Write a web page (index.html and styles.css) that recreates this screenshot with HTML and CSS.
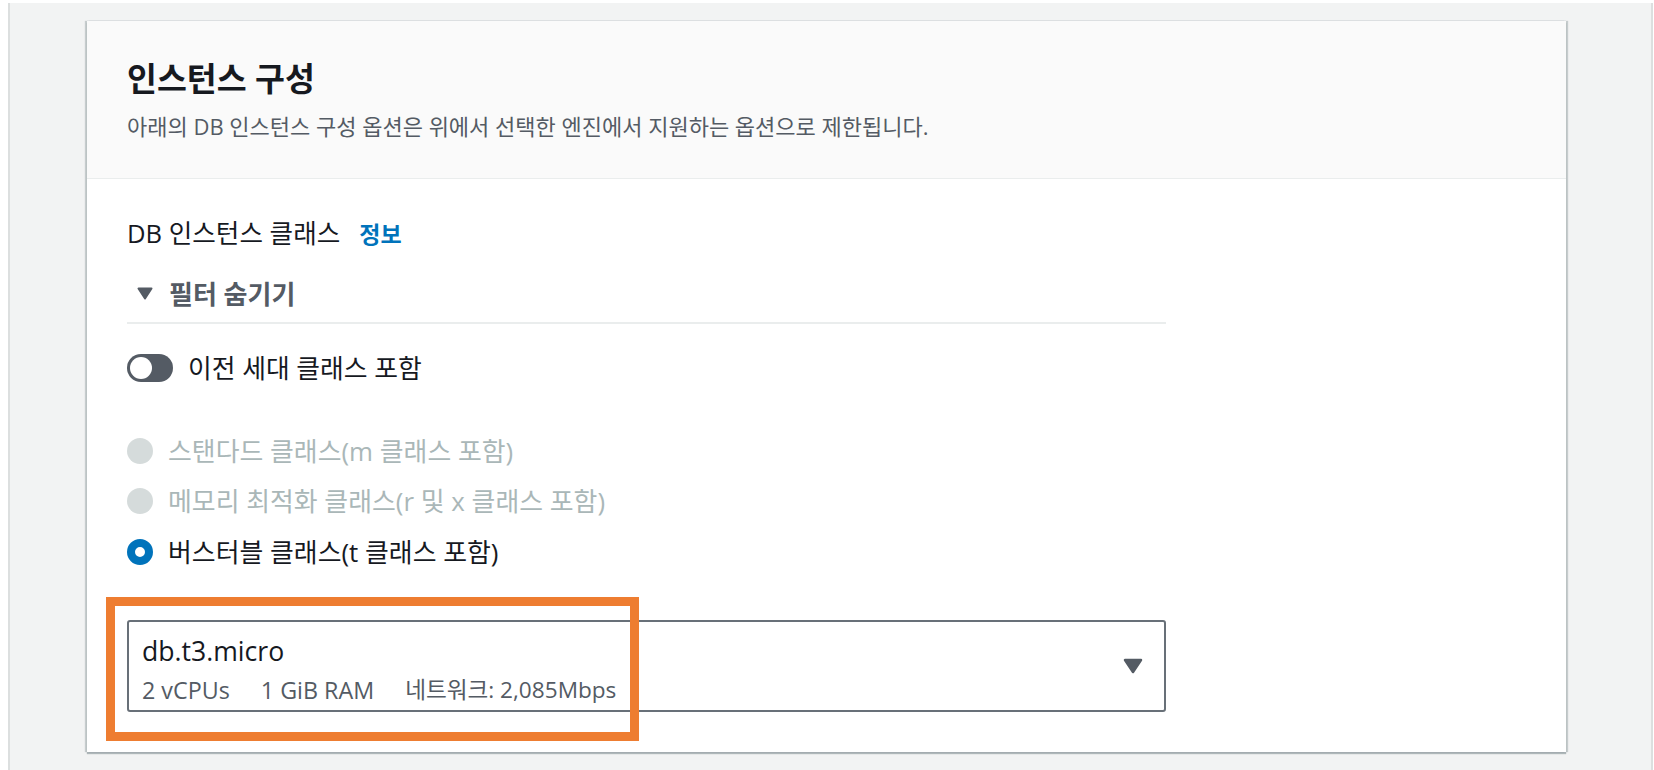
FILE: index.html
```html
<!DOCTYPE html>
<html lang="ko">
<head>
<meta charset="utf-8">
<title>인스턴스 구성</title>
<link rel="stylesheet" href="styles.css">
</head>
<body>
<div class="page">
  <section class="card">
    <header class="card-header">
      <h2 class="title">인스턴스 구성</h2>
      <p class="desc">아래의 DB 인스턴스 구성 옵션은 위에서 선택한 엔진에서 지원하는 옵션으로 제한됩니다.</p>
    </header>
    <div class="card-body">
      <div class="field-label"><span>DB 인스턴스 클래스</span><a class="info">정보</a></div>
      <div class="filter-toggle">
        <svg class="filter-caret" width="16" height="13" viewBox="0 0 16 13"><path d="M1.5 1.5 H14.5 L8 11.5 Z" fill="#545b64" stroke="#545b64" stroke-width="2" stroke-linejoin="round"/></svg>
        <span>필터 숨기기</span>
      </div>
      <div class="divider"></div>
      <div class="toggle-row">
        <span class="toggle"><span class="knob"></span></span>
        <span>이전 세대 클래스 포함</span>
      </div>
      <div class="radios">
        <div class="radio-row disabled"><span class="radio"></span><span>스탠다드 클래스(m 클래스 포함)</span></div>
        <div class="radio-row disabled"><span class="radio"></span><span>메모리 최적화 클래스(r 및 x 클래스 포함)</span></div>
        <div class="radio-row"><span class="radio checked"></span><span>버스터블 클래스(t 클래스 포함)</span></div>
      </div>
      <div class="select-wrap">
        <div class="select">
          <div class="select-text">
            <div class="select-value">db.t3.micro</div>
            <div class="select-meta"><span>2 vCPUs</span><span>1 GiB RAM</span><span class="net">네트워크: 2,085Mbps</span></div>
          </div>
          <svg class="select-caret" width="20" height="16" viewBox="0 0 20 16"><path d="M2 2 H18 L10 14 Z" fill="#545b64" stroke="#545b64" stroke-width="2.5" stroke-linejoin="round"/></svg>
        </div>
        <div class="highlight"></div>
      </div>
    </div>
  </section>
</div>
</body>
</html>
```

FILE: styles.css
```css
html, body {
  margin: 0;
  background: #ffffff;
}
body {
  padding: 3px 1px 0 8px;
  font-family: "Open Sans", "Noto Sans CJK KR", sans-serif;
  color: #16191f;
}
.page {
  box-sizing: border-box;
  height: 767px;
  background: #f2f3f3;
  border-left: 2px solid #dcdfdf;
  border-right: 2px solid #dcdfdf;
  padding: 18px 0 0 77px;
}
.card {
  width: 1479px;
  height: 731px;
  background: #ffffff;
  box-shadow: -2px 0 1px rgba(0, 28, 36, 0.18), 2px 0 1px rgba(0, 28, 36, 0.18), 0 2px 1px rgba(0, 28, 36, 0.28), 0 -1px 0 #eaeded;
}
.card-header {
  box-sizing: border-box;
  height: 158px;
  background: #fafafa;
  border-bottom: 1px solid #eaeded;
  padding: 40px 40px 0 40px;
}
.title {
  margin: 0;
  font-size: 32.5px;
  line-height: 36px;
  font-weight: 700;
  color: #16191f;
}
.desc {
  margin: 15px 0 0;
  font-size: 22px;
  line-height: 28px;
  color: #545b64;
}
.card-body {
  padding: 40px 40px 40px 40px;
}
.field-label {
  display: flex;
  align-items: center;
  font-size: 25.6px;
  line-height: 30px;
  color: #16191f;
}
.info {
  margin-left: 19px;
  font-size: 23px;
  font-weight: 700;
  color: #0073bb;
}
.filter-toggle {
  margin-top: 29.5px;
  display: flex;
  align-items: center;
  gap: 16px;
  padding-left: 10px;
  font-size: 26px;
  line-height: 30px;
  font-weight: 700;
  color: #545b64;
}
.filter-caret {
  display: block;
}
.divider {
  margin-top: 13.5px;
  width: 1039px;
  height: 2px;
  background: #eaeded;
}
.toggle-row {
  margin-top: 29px;
  display: flex;
  align-items: center;
  gap: 15px;
  font-size: 25.8px;
  line-height: 30px;
}
.toggle {
  position: relative;
  display: block;
  width: 46px;
  height: 28px;
  border-radius: 14px;
  background: #545b64;
}
.knob {
  position: absolute;
  left: 3px;
  top: 3px;
  width: 22px;
  height: 22px;
  border-radius: 50%;
  background: #ffffff;
}
.radios {
  margin-top: 52.5px;
  display: flex;
  flex-direction: column;
  gap: 20.5px;
}
.radio-row {
  display: flex;
  align-items: center;
  gap: 15px;
  font-size: 25.9px;
  line-height: 30px;
  color: #16191f;
}
.radio {
  box-sizing: border-box;
  display: block;
  width: 26px;
  height: 26px;
  border-radius: 50%;
  background: #ffffff;
}
.radio-row.disabled {
  color: #aab7b8;
}
.radio-row.disabled .radio {
  background: #d5dbdb;
}
.radio.checked {
  border: 8px solid #0073bb;
}
.select-wrap {
  position: relative;
  margin-top: 53.5px;
  width: 1039px;
}
.select {
  box-sizing: border-box;
  height: 91.5px;
  border: 2px solid #687078;
  border-radius: 3px;
  display: flex;
  align-items: center;
  justify-content: space-between;
  padding: 0 21px 0 13px;
}
.select-text {
  display: flex;
  flex-direction: column;
  gap: 10px;
  padding-top: 7.5px;
}
.select-value {
  font-size: 26.6px;
  line-height: 30px;
  color: #16191f;
}
.select-meta {
  display: flex;
  gap: 31px;
  font-size: 23.3px;
  line-height: 28px;
  color: #545b64;
}
.select-meta .net {
  font-size: 22.6px;
}
.select-caret {
  display: block;
}
.highlight {
  position: absolute;
  left: -21px;
  top: -23.5px;
  width: 533px;
  height: 144px;
  box-sizing: border-box;
  border: 9px solid #ee7d31;
  pointer-events: none;
}
```
